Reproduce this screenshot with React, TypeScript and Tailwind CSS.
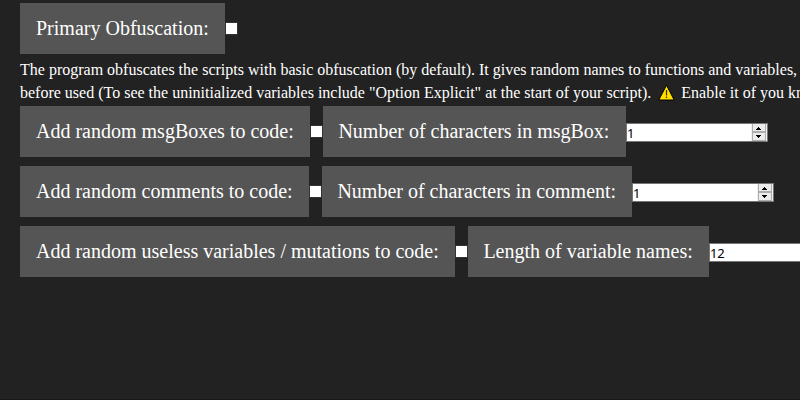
interface FieldLabelProps {
  text: string;
  width: string;
  padding?: string;
}

function FieldLabel({ text, width, padding = "pl-4" }: FieldLabelProps) {
  return (
    <span
      className={`flex h-[51px] shrink-0 items-center bg-[#555555] text-[20px] leading-[23px] ${padding} ${width}`}
    >
      {text}
    </span>
  );
}

function CheckBox({ label }: { label: string }) {
  return (
    <input
      aria-label={label}
      className="size-[13px] shrink-0 appearance-none border border-[#333333] bg-white"
      type="checkbox"
    />
  );
}

function Spinner() {
  return (
    <svg className="h-[17px] w-4 shrink-0" shapeRendering="crispEdges" viewBox="0 0 16 17">
      <rect fill="#f0f0f0" height="17" width="16" />
      <path d="M1 0h14v9H1zM1 9h14v8H1z" fill="#adadad" />
      <path d="M2 0h12v7H2zM2 9h12v7H2z" fill="#ececec" />
      <path d="M7 3h1v1h1v1h1v1H5V5h1V4h1zM5 11h5v1H9v1H8v1H7v-1H6v-1H5z" fill="#000000" />
    </svg>
  );
}

function NumberField({ value }: { value: string }) {
  return (
    <div className="mt-[2px] flex h-[19px] w-[142px] shrink-0 border border-[#767676] bg-white font-['Noto_Sans','Open_Sans',sans-serif] text-[13px] leading-[19px] tracking-[-0.3px] text-black">
      <span className="w-[124px]">{value}</span>
      <Spinner />
    </div>
  );
}

export default function App() {
  return (
    <main className="flex h-[400px] w-[800px] flex-col overflow-hidden border-b border-[#1c171c] bg-[#222222] pt-[3px] pl-5 font-['Liberation_Serif',serif] whitespace-nowrap text-white">
      <div className="flex items-center">
        <FieldLabel text="Primary Obfuscation:" width="w-[205px]" />
        <CheckBox label="Primary Obfuscation" />
      </div>
      <div className="mt-1 h-12 text-[16px] leading-[23px]">
        <p>
          The program obfuscates the scripts with basic obfuscation (by default). It gives random
          names to functions and variables,
        </p>
        <p className="flex">
          <span>
            before used (To see the uninitialized variables include "Option Explicit" at the start of
            your script).
          </span>
          <svg className="mt-[3px] mr-[6px] ml-[7px] h-[17px] w-[17px] shrink-0" viewBox="0 0 17 17">
            <path d="M8.5 1.2 16.2 16H.8z" fill="#ffde00" stroke="#000000" strokeLinejoin="round" />
            <path d="M8.5 6v5.5M8.5 12.5v1.5" stroke="#3d3000" strokeWidth="1.2" />
          </svg>
          <span>Enable it of you know</span>
        </p>
      </div>
      <div className="flex flex-col gap-[9px]">
        <div className="flex items-center">
          <FieldLabel text="Add random msgBoxes to code:" width="w-[290px]" />
          <CheckBox label="Add random msgBoxes" />
          <FieldLabel
            padding="pl-[15.4px]"
            text="Number of characters in msgBox:"
            width="w-[303px]"
          />
          <NumberField value="1" />
        </div>
        <div className="flex items-center">
          <FieldLabel text="Add random comments to code:" width="w-[289px]" />
          <CheckBox label="Add random comments" />
          <FieldLabel
            padding="pl-[15.4px]"
            text="Number of characters in comment:"
            width="w-[310px]"
          />
          <NumberField value="1" />
        </div>
        <div className="flex items-center">
          <FieldLabel text="Add random useless variables / mutations to code:" width="w-[435px]" />
          <CheckBox label="Add random useless variables" />
          <FieldLabel
            padding="pl-[15.4px]"
            text="Length of variable names:"
            width="w-[241px]"
          />
          <NumberField value="12" />
        </div>
      </div>
    </main>
  );
}
